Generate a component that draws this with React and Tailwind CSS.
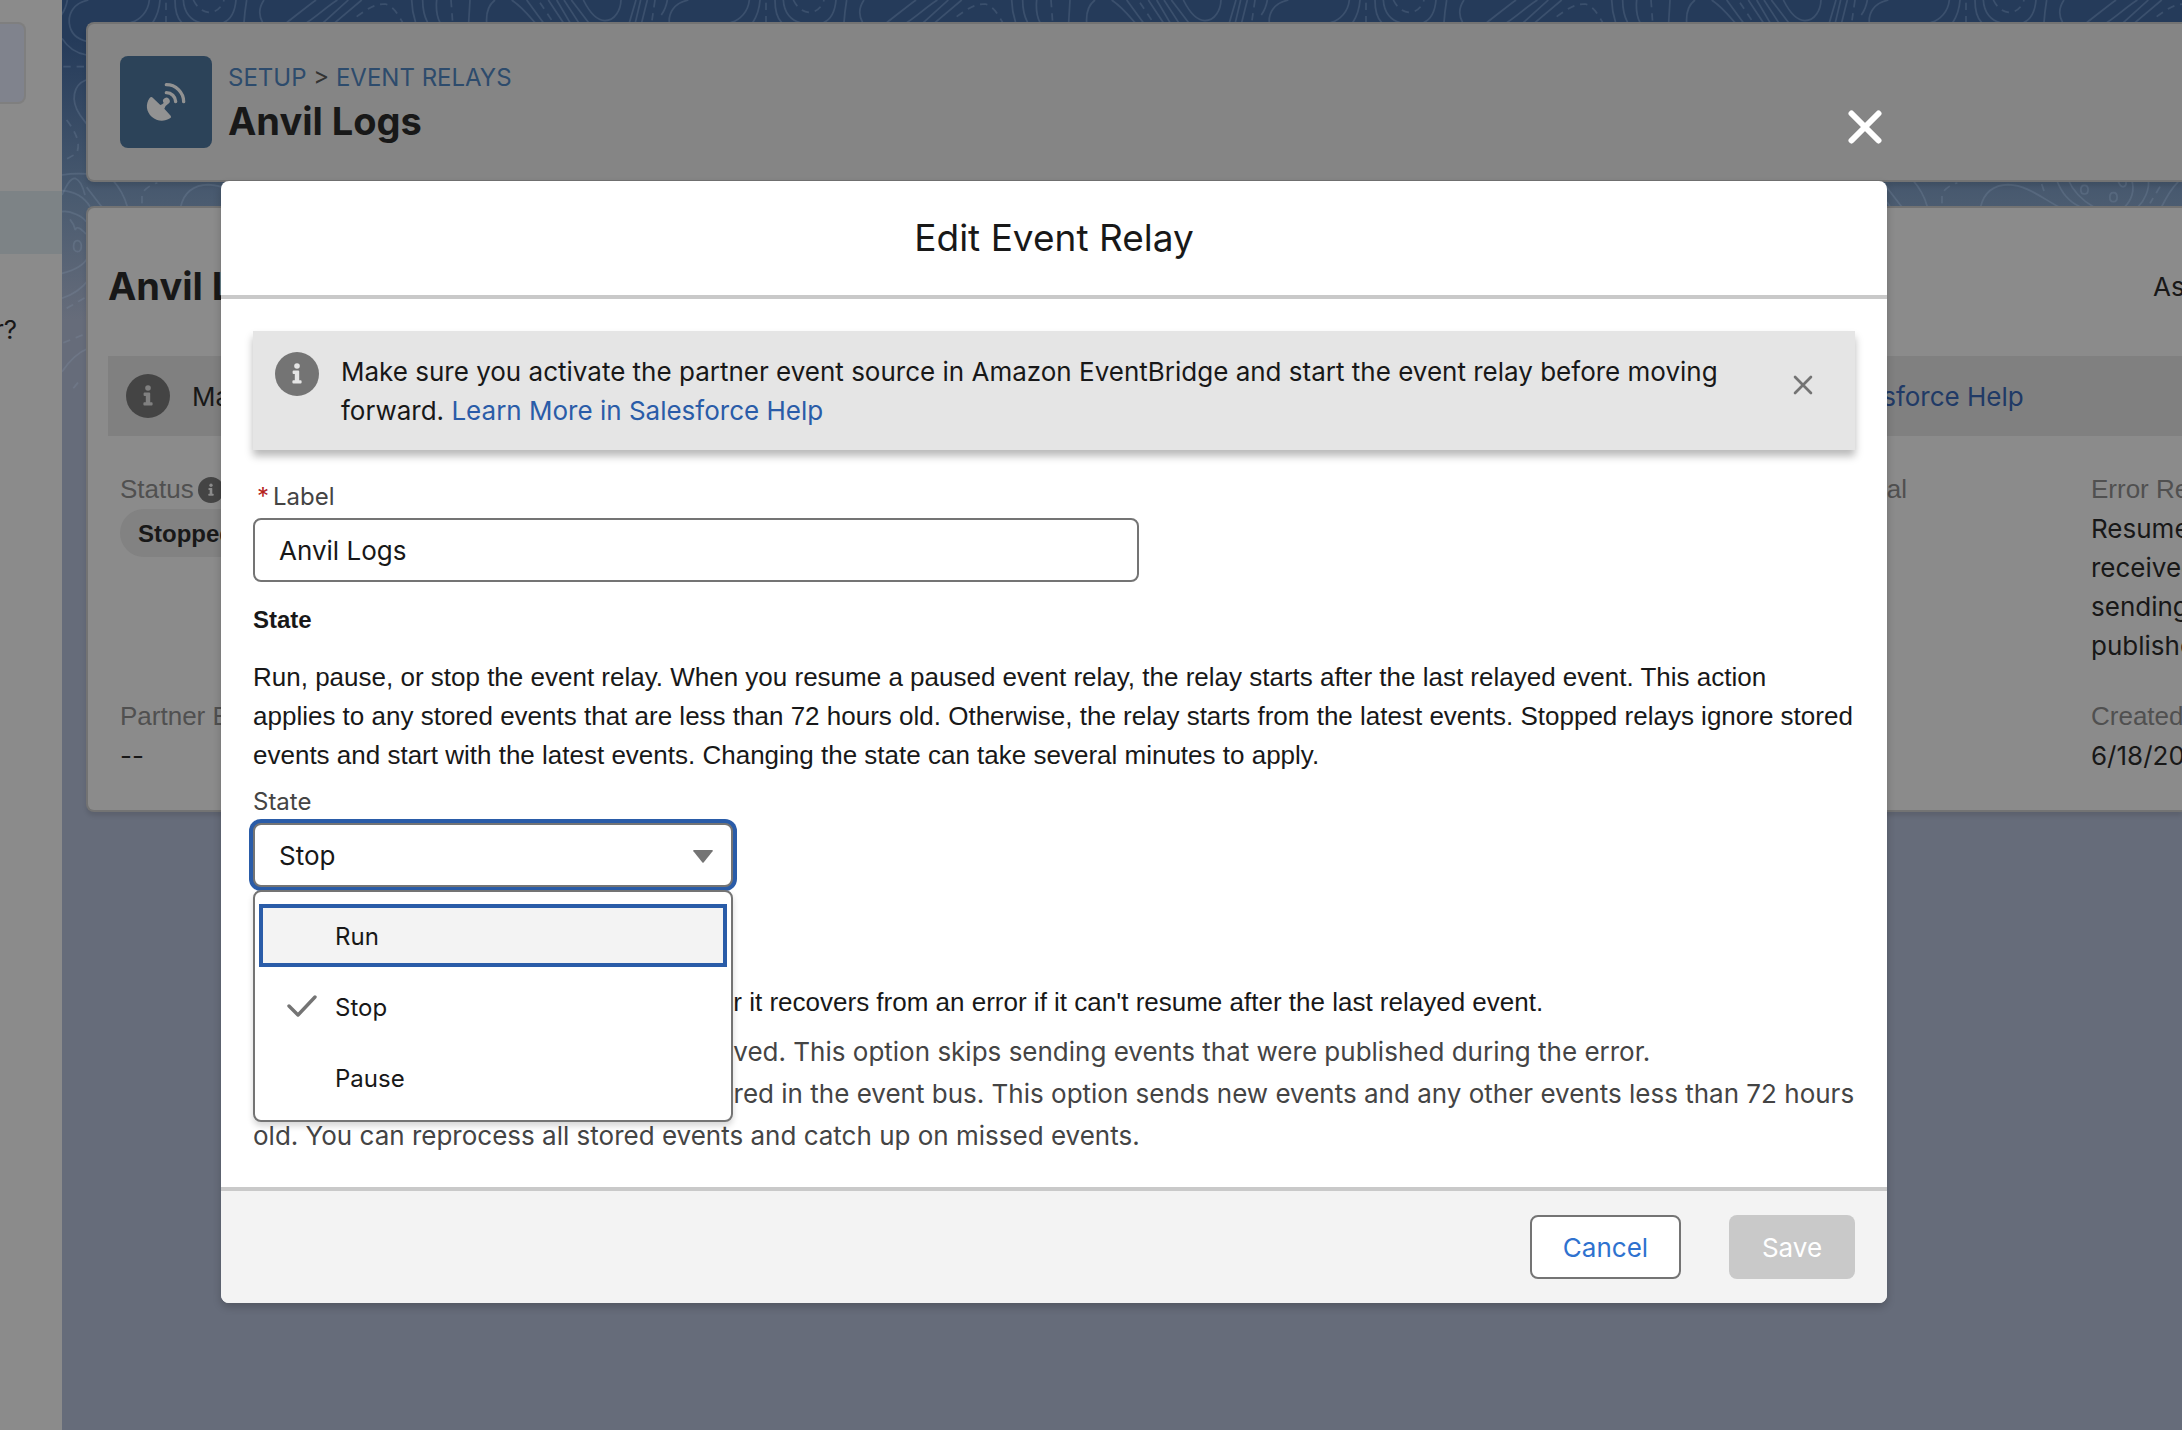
const sans = "font-['Inter',sans-serif]";
const arial = "font-['Liberation_Sans',sans-serif]";

const CONTOURS = [
  "M85 0C40 10 25 40 28 70C32 105 55 118 80 124",
  "M6 115C25 145 50 160 80 165",
  "M22 0Q18 25 4 45",
  "M268 0C265 35 240 60 212 68",
  "M300 0C298 30 290 50 278 68",
  "M345 0C345 35 352 55 365 68",
  "M370 0C372 40 395 62 420 68",
  "M528 0C525 35 515 58 490 68",
  "M560 0C555 30 553 50 552 68",
  "M612 0C598 20 595 45 608 68",
  "M768 0C740 20 710 45 680 68",
  "M832 0C800 20 775 45 740 68",
  "M865 0L790 68M905 0L825 68",
  "M1055 0Q1056 35 1067 68M1088 0Q1088 40 1103 68M1130 0Q1126 40 1140 68",
  "M1230 0L1226 68M1305 0C1285 15 1278 40 1280 68",
  "M1355 0C1385 20 1405 45 1425 68M1400 0L1450 68M1465 0L1510 68M1490 0L1530 68",
  "M1512 0L1556 68M1534 0L1586 68",
  "M1570 0C1590 40 1610 62 1635 62C1665 62 1682 30 1683 0",
  "M1728 0L1708 68M1742 0L1726 68M1762 0L1745 68",
  "M78 240C40 255 30 300 60 345L80 372",
  "M6 525Q55 517 110 525",
  "M6 585C20 555 30 535 45 535C60 540 70 565 75 585",
  "M6 572C50 575 75 595 90 620",
  "M80 562L125 620M158 540C185 570 195 595 202 620",
  "M362 620C372 580 400 555 445 554C500 556 540 590 595 620",
  "M590 540C605 580 625 605 660 620M625 540C640 575 665 600 700 620",
  "M775 545C785 570 800 560 798 545M815 540C825 570 815 600 795 620M865 540C870 570 850 605 835 620M955 545C930 570 915 600 905 620",
  "M6 635C30 630 70 650 78 665M30 658Q42 672 46 690Q50 672 78 702",
  "M52 722C68 722 68 755 52 755C36 755 38 722 52 722",
  "M673 556C688 556 688 582 673 582C659 582 659 556 673 556",
  "M760 578C775 578 775 605 760 605C746 605 746 578 760 578",
  "M6 820C50 810 75 790 85 770M6 895C50 880 70 860 85 840",
  "M6 1115C30 1080 60 1055 85 1045",
];
const DASHES = [
  "M318 8L318 68",
  "M400 0C415 30 435 37 450 37C475 35 488 15 492 0",
  "M890 50C930 20 950 12 975 12C1000 18 1015 45 1028 68",
  "M1173 0L1178 68M1440 8L1480 68M1785 0L1775 68",
  "M10 200L75 200",
  "M20 360C50 400 62 430 50 460L6 485",
  "M246 610L246 580Q262 558 292 548",
  "M545 552L555 582M900 560L870 610",
  "M20 925L80 890M10 1028L80 1000M40 1165L60 1140",
];

function Topography() {
  return (
    <svg className="absolute inset-x-0 top-0 h-[400px] w-full" aria-hidden="true">
      <defs>
        <pattern id="topo" x="-2" y="0" width="600" height="400" patternUnits="userSpaceOnUse" viewBox="0 0 1800 1200">
          <g fill="none" stroke="#8a9bb0" strokeOpacity="0.22" strokeWidth="5">
            {CONTOURS.map((d) => <path key={d} d={d} />)}
            {DASHES.map((d) => <path key={d} d={d} strokeDasharray="22 18" />)}
          </g>
        </pattern>
      </defs>
      <rect width="100%" height="100%" fill="url(#topo)" />
    </svg>
  );
}

function InfoIcon({ className, glyph }) {
  return (
    <svg viewBox="0 0 44 44" className={className} aria-hidden="true">
      <circle cx="22" cy="22" r="22" fill="currentColor" />
      <g fill={glyph}>
        <circle cx="22" cy="14" r="2.8" />
        <path d="M18.6 18.5h4.6a1 1 0 0 1 1 1v8.7h1.4a1 1 0 0 1 1 1v1.4a1 1 0 0 1-1 1h-7.2a1 1 0 0 1-1-1v-1.4a1 1 0 0 1 1-1h1.4v-6.3h-1.2a1 1 0 0 1-1-1v-1.4a1 1 0 0 1 1-1z" />
      </g>
    </svg>
  );
}

function CrossIcon({ className, strokeWidth }) {
  return (
    <svg viewBox="0 0 34 34" className={className} fill="none" stroke="currentColor" strokeWidth={strokeWidth} strokeLinecap="round" aria-hidden="true">
      <path d="M3.5 3.5l27 27M30.5 3.5l-27 27" />
    </svg>
  );
}

function DishIcon() {
  return (
    <svg viewBox="0 0 276 276" className="size-[92px] shrink-0 rounded-lg bg-[#2c4359]" aria-hidden="true">
      <path fill="#929292" d="M89 126Q94 120 99 126L121 147Q127 146 131 141A10 10 0 1 1 144 144Q134 150 133 158L152 179Q156 184 150 187C133 198 110 196 96 183C78 167 76 144 89 126Z" />
      <g fill="none" stroke="#929292" strokeWidth="10" strokeLinecap="round">
        <path d="M139 86A52 52 0 0 1 191 137" />
        <path d="M139 110A28 28 0 0 1 167 137" />
      </g>
    </svg>
  );
}

function Field({ label, children, icon }) {
  return (
    <div className="min-h-[227px] w-[657px] shrink-0">
      <dt className={`${arial} flex items-center gap-1 whitespace-nowrap text-[26px] leading-[39px] text-[#505050]`}>{label}{icon}</dt>
      <dd className="text-[26px] leading-[39px]">{children}</dd>
    </div>
  );
}

function Page() {
  return (
    <div className="flex min-h-screen overflow-hidden bg-[#8b8b8b]">
      <aside className="flex w-[62px] shrink-0 flex-col overflow-hidden pt-[22px]">
        <div className="mr-9 h-[82px] rounded-r-lg border-2 border-l-0 border-[#7f7f7f] bg-[#80838d]" />
        <div className="mt-[87px] h-[63px] bg-[#7d8386]" />
        <div className="mt-[56px] flex w-[17px] justify-end whitespace-nowrap text-[26px] leading-[39px]">for?</div>
      </aside>
      <main className="relative min-w-0 flex-1 bg-[#666c7a]">
        <div className="absolute inset-x-0 top-0 h-[400px] bg-linear-to-b from-[#253b5a] from-10% via-[#4a5b70] via-50% to-[#666c7a] to-80%" />
        <Topography />
        <div className="relative flex flex-col gap-6 pt-[22px] pl-6">
          <header className="flex h-40 items-start gap-4 rounded-l-lg border-2 border-r-0 border-[#737373] bg-[#858585] pt-8 pl-8 shadow-[0_4px_4px_rgba(0,0,0,0.1)]">
            <DishIcon />
            <div className="pt-1">
              <nav className="text-[24px] leading-9 text-[#2d4b6c]">
                <a href="#setup">SETUP</a> <span className="text-[#333]">&gt;</span> <a href="#relays">EVENT RELAYS</a>
              </nav>
              <h1 className="text-[38px] leading-[50px] font-bold">Anvil Logs</h1>
            </div>
          </header>
          <section className="h-[606px] overflow-hidden rounded-l-lg border-2 border-r-0 border-[#737373] bg-[#8b8b8b] shadow-[0_4px_4px_rgba(0,0,0,0.1)]">
            <div className="flex h-[148px] items-center justify-between pt-2 pl-5">
              <h2 className="text-[38px] font-bold">Anvil Logs</h2>
              <div className="w-[29px] text-[26px] whitespace-nowrap">Associate</div>
            </div>
            <div className="ml-5 flex h-20 items-center gap-[22px] bg-[#808080] pl-[18px] whitespace-nowrap">
              <InfoIcon className="size-11 shrink-0 text-[#444]" glyph="#808080" />
              <p className="flex text-[26px]">
                <span className="w-[1460px] overflow-hidden">Make sure you activate the partner event source in Amazon EventBridge and start the event relay before moving forward.</span>
                <a href="#help" className="text-[#203a66]">Learn More in Salesforce Help</a>
              </p>
            </div>
            <dl className="flex pt-[34px] pl-8">
              <div>
                <Field label="Status" icon={<InfoIcon className="size-[26px] text-[#444]" glyph="#8b8b8b" />}>
                  <span className={`${arial} inline-flex h-12 items-center rounded-full bg-[#828282] px-[18px] text-[24px] font-bold`}>Stopped</span>
                </Field>
                <Field label="Partner Event Source Name">--</Field>
              </div>
              <Field label="Event Channel">{""}</Field>
              <Field label={<span className="flex w-[473px] justify-end">Destination Resource Named Credential</span>}>{""}</Field>
              <div>
                <Field label="Error Recovery Option">
                  <p className="whitespace-nowrap">Resume from latest<br />received event, skip<br />sending the events<br />published earlier</p>
                </Field>
                <Field label="Created By">6/18/2024</Field>
              </div>
            </dl>
          </section>
        </div>
      </main>
    </div>
  );
}

function StateMenu() {
  const options = ["Run", "Stop", "Pause"];
  return (
    <ul role="listbox" aria-label="State options" className="absolute top-[67px] left-0 z-10 flex w-full flex-col gap-2 rounded-lg border-2 border-[#747474] bg-white px-1 pt-3 pb-[11px] shadow-[0_4px_6px_rgba(0,0,0,0.16)]">
      {options.map((name) => (
        <li key={name} role="option" aria-selected={name === "Stop"}>
          <button type="button" className={`flex h-[63px] w-full items-center gap-[18px] border-4 pt-[3px] pl-6 text-left text-[24px] ${name === "Run" ? "border-[#2a5ca8] bg-[#f3f3f3]" : "border-transparent"}`}>
            <svg viewBox="0 0 30 22" className="mb-1 h-[22px] w-[30px]" fill="none" stroke={name === "Stop" ? "#747474" : "none"} strokeWidth="3.4" strokeLinecap="round" strokeLinejoin="round" aria-hidden="true">
              <path d="M2 11l9 9L28 2" />
            </svg>
            {name}
          </button>
        </li>
      ))}
    </ul>
  );
}

function Modal() {
  return (
    <div className="absolute inset-x-0 top-0 pt-[181px] pr-[295px] pl-[221px]">
      <div role="dialog" aria-labelledby="dialog-title" className="relative rounded-lg bg-white shadow-[0_4px_8px_rgba(0,0,0,0.2)]">
        <button type="button" aria-label="Close" className="absolute -top-[71px] right-[5px] text-white">
          <CrossIcon className="size-[34px]" strokeWidth="6" />
        </button>
        <header className="flex h-[118px] items-center justify-center border-b-4 border-[#c9c9c9]">
          <h2 id="dialog-title" className="text-[37px]">Edit Event Relay</h2>
        </header>
        <div className="px-8 pt-8 pb-[30px]">
          <div className="flex h-[119px] items-start bg-[#e5e5e5] pt-[21px] pl-[22px] shadow-[0_6px_8px_rgba(0,0,0,0.28)]">
            <InfoIcon className="size-11 shrink-0 text-[#747474]" glyph="#e5e5e5" />
            <p className="ml-[22px] flex-1 text-[26px] leading-[39px]">
              Make sure you activate the partner event source in Amazon EventBridge and start the event relay before moving<br />
              forward. <a href="#help" className="text-[#2a5ca8]">Learn More in Salesforce Help</a>
            </p>
            <button type="button" aria-label="Dismiss" className="mt-[23px] mr-[42px] text-[#747474]">
              <CrossIcon className="size-5" strokeWidth="4.6" />
            </button>
          </div>
          <label htmlFor="relay-label" className="mt-[29px] flex h-9 items-center gap-1 pl-1 text-[24px] text-[#444]">
            <span className="text-[#b5231c]">*</span>Label
          </label>
          <input id="relay-label" defaultValue="Anvil Logs" className="mt-[3px] block h-16 w-[886px] rounded-lg border-2 border-[#747474] bg-white px-6 text-[26px]" />
          <h3 className={`${arial} mt-5 text-[24px] leading-9 font-bold`}>State</h3>
          <p className={`${arial} mt-5 text-[26px] leading-[39px]`}>
            Run, pause, or stop the event relay. When you resume a paused event relay, the relay starts after the last relayed event. This action<br />
            applies to any stored events that are less than 72 hours old. Otherwise, the relay starts from the latest events. Stopped relays ignore stored<br />
            events and start with the latest events. Changing the state can take several minutes to apply.
          </p>
          <label htmlFor="relay-state" className="mt-[9px] block text-[24px] leading-9 text-[#444]">State</label>
          <div className="relative mt-[3px] w-[480px]">
            <select id="relay-state" defaultValue="Stop" className="block h-16 w-full appearance-none rounded-lg border-2 border-[#747474] bg-white px-6 text-[26px] ring-4 ring-[#2a5ca8]">
              <option>Run</option>
              <option>Stop</option>
              <option>Pause</option>
            </select>
            <svg viewBox="0 0 20 13" className="pointer-events-none absolute top-[27px] right-5 h-[13px] w-5" aria-hidden="true">
              <path d="M1 0h18q1.500 0 .6 1.200L10.600 12.500q-.6.7-1.200 0L.4 1.200Q-.5 0 1 0z" fill="#747474" />
            </svg>
            <StateMenu />
          </div>
          <h3 className={`${arial} mt-5 text-[24px] leading-9 font-bold`}>Error Recovery</h3>
          <p className={`${arial} mt-10 text-[26px] leading-[39px]`}>
            <span className="inline-flex w-[489px] justify-end whitespace-nowrap">Set where the event relay resumes after</span> it recovers from an error if it can't resume after the last relayed event.
          </p>
          <ul className="mt-[9px] text-[26px] leading-[42px] text-[#444]">
            <li><span className="inline-flex w-[533px] justify-end whitespace-nowrap">Resume after the latest event received.</span> This option skips sending events that were published during the error.</li>
            <li>
              <span className="inline-flex w-[521px] justify-end whitespace-nowrap">Resume from earliest event stored</span> in the event bus. This option sends new events and any other events less than 72 hours<br />
              old. You can reprocess all stored events and catch up on missed events.
            </li>
          </ul>
        </div>
        <footer className="flex justify-end gap-12 rounded-b-lg border-t-4 border-[#c9c9c9] bg-[#f3f3f3] px-8 py-6">
          <button type="button" className="h-16 w-[151px] rounded-lg border-2 border-[#747474] bg-white text-[26px] text-[#2f72cf]">Cancel</button>
          <button type="button" className="h-16 w-[126px] rounded-lg bg-[#c9c9c9] text-[26px] text-white">Save</button>
        </footer>
      </div>
    </div>
  );
}

export default function App() {
  return (
    <div className={`${sans} relative overflow-hidden text-[#181818]`}>
      <Page />
      <Modal />
    </div>
  );
}
